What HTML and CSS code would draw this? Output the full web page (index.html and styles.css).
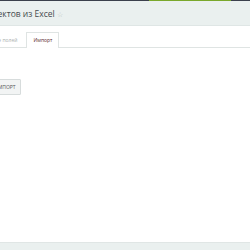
FILE: index.html
```html
<!DOCTYPE html>
<html lang="ru">
<head>
  <meta charset="UTF-8" />
  <title>Импорт объектов из Excel</title>
  <link rel="stylesheet" href="styles.css">
</head>
<body>
  <div class="page">
    <div class="topbar"><span class="topbar-accent"></span></div>

    <div class="header">
      <h1 class="title">Импорт объектов из Excel <span class="star">☆</span></h1>
    </div>

    <div class="content">
      <ul class="tabs">
        <li class="tab">Соответствие полей</li>
        <li class="tab tab-active">Импорт</li>
      </ul>

      <div class="tab-body">
        <button class="btn" type="button">Импорт</button>
      </div>
    </div>

    <div class="footer"></div>
  </div>
</body>
</html>
```

FILE: styles.css
```css
body {
  margin: 0;
  font-family: "Open Sans", "Noto Sans", sans-serif;
  color: #333;
  background: #fff;
  overflow: hidden;
}

.page {
  display: flex;
  flex-direction: column;
  min-height: 100vh;
}

.topbar {
  height: 1px;
  background: #3b404c;
  display: flex;
}

.topbar-accent {
  width: 82px;
  margin-left: 149px;
  background: #7aa82c;
}

.header {
  height: 24px;
  background: #eaf0ef;
  border-bottom: 1px solid #dfe6e5;
  display: flex;
  align-items: center;
}

.title {
  margin: 0 0 0 -53px;
  font-size: 8.5px;
  font-weight: normal;
  color: #454a4e;
  white-space: nowrap;
}

.star {
  font-size: 7px;
  color: #b9c4c2;
}

.content {
  padding-top: 6px;
}

.tabs {
  list-style: none;
  margin: 0 0 0 -39px;
  padding: 0;
  display: flex;
  border-bottom: 1px solid #dfe4e3;
  white-space: nowrap;
}

.tab {
  height: 14px;
  line-height: 14px;
  font-size: 5px;
  color: #aab0b0;
  padding: 0 6px;
  margin-right: 2px;
  border: 1px solid transparent;
  border-bottom: none;
}

.tab-active {
  color: #5a2a2a;
  background: #fff;
  border-color: #dfe4e3;
  margin-bottom: -1px;
  height: 15px;
}

.tab-body {
  padding-top: 24px;
  margin-left: -12px;
}

.btn {
  font-family: inherit;
  font-size: 5px;
  text-transform: uppercase;
  color: #555;
  background: #f2f4f4;
  border: 1px solid #d7dcdc;
  border-radius: 1px;
  height: 16px;
  padding: 0 4px 0 5px;
}

.footer {
  margin-top: auto;
  height: 7px;
  background: #eaf0ef;
  border-top: 1px solid #e0e6e5;
}
```
